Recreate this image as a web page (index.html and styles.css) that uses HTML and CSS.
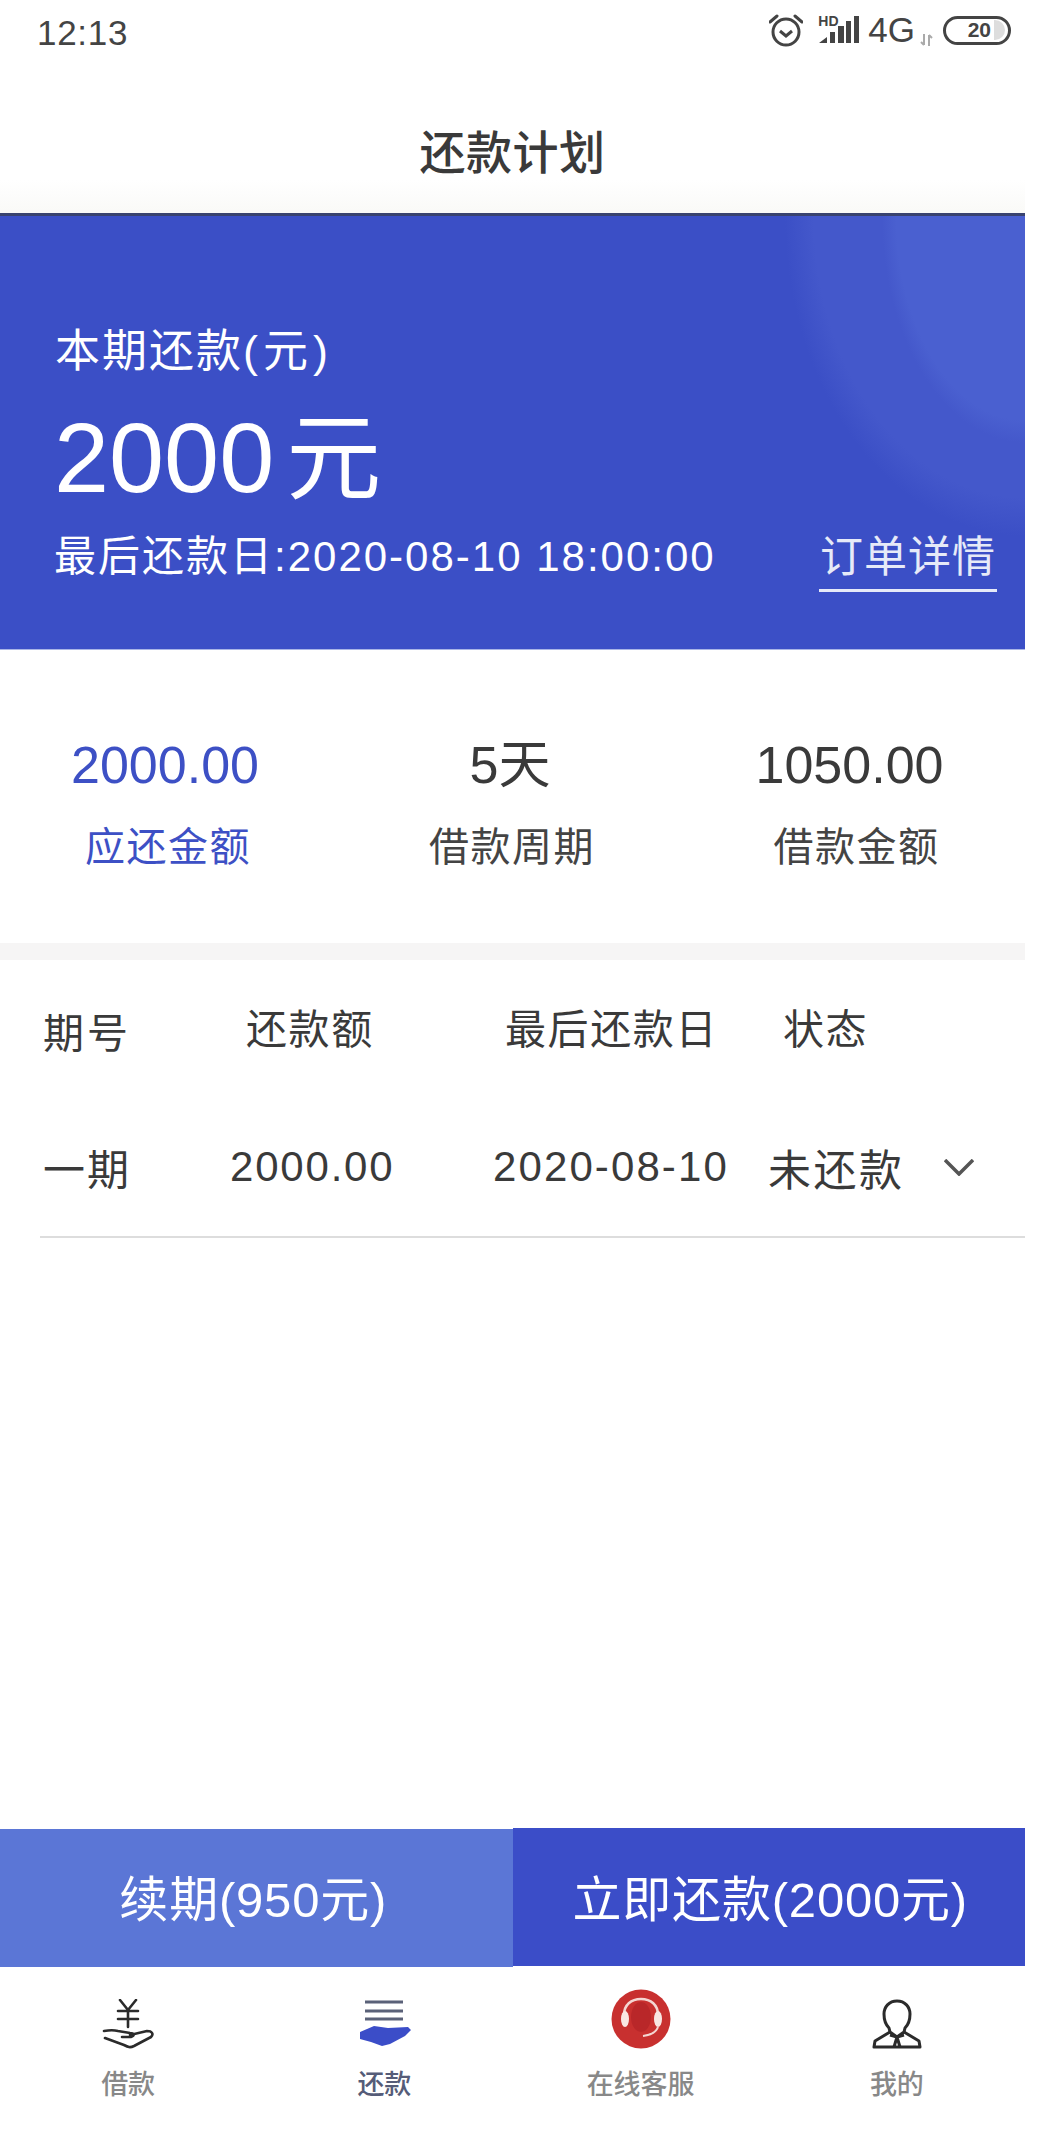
FILE: index.html
```html
<!DOCTYPE html>
<html>
<head>
  <meta charset="utf-8">
  <title>还款计划</title>
  <link rel="stylesheet" href="styles.css">
</head>
<body>
  <div class="app">
    <div class="status-bar">
      <span class="time">12:13</span>
      <div class="status-icons">
        <svg class="alarm" width="34" height="34" viewBox="0 0 34 34" fill="none" stroke="#444" stroke-width="3">
          <circle cx="17" cy="19" r="13"/>
          <path d="M11 18l6 5 6-5"/>
          <path d="M1 9l7-6M33 9l-7-6" stroke-linecap="round"/>
        </svg>
        <div class="signal">
          <span class="hd">HD</span>
          <svg width="40" height="28" viewBox="0 0 40 28" fill="#444">
            <path d="M0 27l8-6v6zM11 27v-11h5v11zM19 27v-17h6v17zM27 27v-22h5v22zM35 27v-27h5v27z"/>
          </svg>
        </div>
        <span class="network">4G</span>
        <svg class="arrows" width="13" height="12" viewBox="0 0 13 12" fill="none" stroke="#aaa" stroke-width="2">
          <path d="M4 0v11M1 8l3 3M9 12v-11M12 4l-3-3"/>
        </svg>
        <div class="battery">
          <span class="battery-num">20</span>
          <span class="battery-rest"></span>
        </div>
      </div>
    </div>

    <div class="title-bar">还款计划</div>

    <div class="hero">
      <div class="hero-label">本期还款<span class="hero-label-unit">(元)</span></div>
      <div class="hero-amount"><span class="hero-num">2000</span><span class="hero-unit">元</span></div>
      <div class="hero-bottom">
        <span class="hero-date">最后还款日:2020-08-10 18:00:00</span>
        <a class="hero-link">订单详情</a>
      </div>
    </div>

    <div class="stats">
      <div class="stat active">
        <div class="stat-value">2000.00</div>
        <div class="stat-label">应还金额</div>
      </div>
      <div class="stat">
        <div class="stat-value">5天</div>
        <div class="stat-label">借款周期</div>
      </div>
      <div class="stat">
        <div class="stat-value">1050.00</div>
        <div class="stat-label">借款金额</div>
      </div>
    </div>

    <div class="divider"></div>

    <div class="plan-row plan-head">
      <span class="col-no">期号</span>
      <span class="col-amount">还款额</span>
      <span class="col-date">最后还款日</span>
      <span class="col-state">状态</span>
    </div>
    <div class="plan-row plan-item">
      <span class="col-no">一期</span>
      <span class="col-amount">2000.00</span>
      <span class="col-date">2020-08-10</span>
      <span class="col-state">未还款</span>
      <svg class="chevron" width="30" height="17" viewBox="0 0 30 17" fill="none" stroke="#555" stroke-width="3.5">
        <path d="M1 1l14 14 14-14"/>
      </svg>
    </div>

    <div class="spacer"></div>

    <div class="actions">
      <button class="btn-renew">续期(950元)</button>
      <button class="btn-repay">立即还款(2000元)</button>
    </div>

    <div class="tab-bar">
      <div class="tab">
        <svg width="56" height="50" viewBox="0 0 56 50" fill="none" stroke="#2b2b2b" stroke-width="2.6" stroke-linecap="round" stroke-linejoin="round">
          <path d="M20 1l8 10 8-10M18 12h20M18 20h20M28 11v17"/>
          <path d="M4 32c6-1 10-1 14 0l12 2c4 0 5 3 1 4l-9 0"/>
          <path d="M30 36l17-4c5 0 7 3 4 6l-17 9c-4 2-6 1-10-1l-19-7"/>
        </svg>
        <span class="tab-label">借款</span>
      </div>
      <div class="tab current">
        <svg width="56" height="50" viewBox="0 0 56 50" fill="none">
          <path d="M9 3h38M9 12h38M9 20h38" stroke="#5a6178" stroke-width="3"/>
          <path d="M4 33l14-6 14 2 20-1 3 3-6 6-15 8-8 2-11-4-11-3z" fill="#3b4dc8"/>
        </svg>
        <span class="tab-label">还款</span>
      </div>
      <div class="tab">
        <svg width="60" height="60" viewBox="0 0 60 60">
          <circle cx="30" cy="30" r="29.5" fill="#c8302f"/>
          <ellipse cx="30" cy="28" rx="10" ry="15" fill="#b92729"/>
          <path d="M13 30v-4c0-10 7-16 17-16s17 6 17 16v4" fill="none" stroke="#f4d6d2" stroke-width="2.5"/>
          <ellipse cx="14" cy="30" rx="4" ry="8" fill="#f9e6e2"/>
          <ellipse cx="47" cy="30" rx="4" ry="8" fill="#f9e6e2"/>
          <path d="M47 38c-2 6-7 8-15 9" fill="none" stroke="#f4d6d2" stroke-width="2"/>
        </svg>
        <span class="tab-label">在线客服</span>
      </div>
      <div class="tab">
        <svg width="52" height="50" viewBox="0 0 52 50" fill="none" stroke="#2b2b2b" stroke-width="3" stroke-linejoin="round">
          <path d="M26 2c-8 0-13 6-13 13 0 5 1 10 5 14l1 4 7 5 7-5 1-4c4-4 5-9 5-14 0-7-5-13-13-13z"/>
          <path d="M19 33l-15 9-1 6h46l-1-6-15-9"/>
          <path d="M19 36l7 2 7-2M23 48l3-10 3 10"/>
        </svg>
        <span class="tab-label">我的</span>
      </div>
    </div>
  </div>
</body>
</html>
```

FILE: styles.css
```css
body {
  margin: 0;
  background-color: white;
  font-family: "Liberation Sans", "Noto Sans CJK SC", sans-serif;
  color: #3a3a3a;
}

.app {
  display: flex;
  flex-direction: column;
  width: 1025px;
  height: 2144px;
}

.status-bar {
  display: flex;
  justify-content: space-between;
  align-items: center;
  height: 60px;
  padding: 0 14px 0 37px;
}

.time {
  font-size: 35px;
  color: #444;
  letter-spacing: 0.7px;
  margin-top: 5px;
}

.status-icons {
  display: flex;
  align-items: center;
}

.alarm {
  margin-right: 16px;
}

.signal {
  position: relative;
  width: 40px;
  height: 28px;
  margin-right: 9px;
}

.signal svg {
  display: block;
}

.hd {
  position: absolute;
  left: -1px;
  top: -3px;
  font-size: 14px;
  font-weight: bold;
  color: #444;
}

.network {
  font-size: 35px;
  color: #444;
  margin-right: 5px;
}

.arrows {
  margin-top: 20px;
  margin-right: 10px;
}

.battery {
  display: flex;
  align-items: center;
  justify-content: flex-end;
  box-sizing: border-box;
  width: 68px;
  height: 29px;
  border: 3px solid #444;
  border-radius: 15px;
  padding-right: 3px;
}

.battery-num {
  font-size: 21px;
  font-weight: bold;
  color: #444;
  margin-right: 3px;
}

.battery-rest {
  width: 11px;
  height: 20px;
  background-color: #ddd;
  border-radius: 0 10px 10px 0;
}

.title-bar {
  height: 153px;
  box-sizing: border-box;
  padding-top: 63px;
  text-align: center;
  font-size: 46px;
  line-height: 60px;
  letter-spacing: 0.5px;
  font-weight: 500;
  background: linear-gradient(#fff 120px, #fafaf8 150px);
}

.hero {
  box-sizing: border-box;
  height: 437px;
  padding: 106px 0 0 55px;
  color: white;
  border-top: 3px solid #39436f;
  border-bottom: 1px solid #a9b5e6;
  background-color: #3b4fc6;
  background-image:
    radial-gradient(ellipse 143px 227px at 100% 0, #4a60d0 90%, rgba(74, 96, 208, 0) 100%),
    radial-gradient(ellipse 240px 320px at 100% 0, #4458cb 88%, rgba(68, 88, 203, 0) 100%);
}

.hero-label {
  font-size: 45px;
  line-height: 60px;
  letter-spacing: 2px;
}

.hero-label-unit {
  letter-spacing: 5px;
}

.hero-amount {
  display: flex;
  align-items: baseline;
  margin-top: 17px;
  line-height: 118px;
}

.hero-num {
  font-size: 99px;
  margin-left: -1px;
}

.hero-unit {
  font-size: 95px;
  margin-left: 12px;
}

.hero-bottom {
  display: flex;
  justify-content: space-between;
  align-items: flex-start;
  padding-right: 28px;
  margin-top: 14px;
}

.hero-date {
  font-size: 42px;
  line-height: 50px;
  letter-spacing: 2px;
  margin-left: -1px;
}

.hero-link {
  font-size: 43px;
  line-height: 50px;
  letter-spacing: 1px;
  padding: 0 1px 7px;
  color: #e6eaf8;
  border-bottom: 3px solid #e6eaf8;
}

.stats {
  display: grid;
  grid-template-columns: 336px 352px 337px;
  height: 293px;
  box-sizing: border-box;
  padding-top: 85px;
  text-align: center;
}

.stat-value {
  font-size: 52px;
  line-height: 60px;
  padding-right: 6px;
}

.stat:nth-child(2) .stat-value {
  padding-right: 4px;
}

.stat:nth-child(3) .stat-value {
  padding-right: 14px;
}

.stat-label {
  font-size: 40px;
  line-height: 50px;
  letter-spacing: 1.5px;
  margin-top: 27px;
  color: #444;
}

.stat.active .stat-value,
.stat.active .stat-label {
  color: #3d50c5;
}

.divider {
  height: 17px;
  background-color: #f6f5f5;
}

.plan-row {
  display: flex;
  align-items: center;
}

.plan-row span {
  white-space: nowrap;
}

.plan-head {
  height: 138px;
  box-sizing: border-box;
  padding: 0 0 6px 43px;
  font-size: 41px;
  letter-spacing: 1.6px;
}

.plan-head .col-no {
  width: 203px;
  letter-spacing: 3px;
  margin-top: 8px;
}

.plan-head .col-amount {
  width: 259px;
}

.plan-head .col-date {
  width: 278px;
}

.plan-item {
  height: 138px;
  margin-left: 40px;
  padding-left: 3px;
  font-size: 42px;
  letter-spacing: 2.1px;
  border-bottom: 2px solid #ddd;
}

.plan-item .col-no {
  width: 187px;
  margin-top: -2px;
}

.plan-item .col-amount {
  width: 263px;
  letter-spacing: 1.8px;
}

.plan-item .col-date {
  width: 275px;
}

.plan-item .col-state {
  width: 131px;
  font-size: 43px;
  letter-spacing: 2.5px;
}

.chevron {
  margin-left: 45px;
}

.spacer {
  flex: 1;
}

.actions {
  display: flex;
  height: 139px;
}

.actions button {
  flex: 0 0 50%;
  border: none;
  font-family: inherit;
  font-size: 49px;
  letter-spacing: 0.8px;
  color: white;
}

.btn-renew {
  margin-top: 1px;
  padding: 0 6px 5px 0;
  background-color: #5b76d6;
}

.btn-repay {
  margin-bottom: 1px;
  padding: 0 0 4px 3px;
  background-color: #3b4dc8;
}

.tab-bar {
  display: flex;
  height: 177px;
}

.tab {
  flex: 1;
  display: flex;
  flex-direction: column;
  align-items: center;
  height: 134px;
  justify-content: flex-end;
}

.tab-label {
  font-size: 27px;
  line-height: 32px;
  font-weight: 500;
  color: #888;
  margin-top: 20px;
}

.tab.current .tab-label {
  color: #555c78;
}
```
